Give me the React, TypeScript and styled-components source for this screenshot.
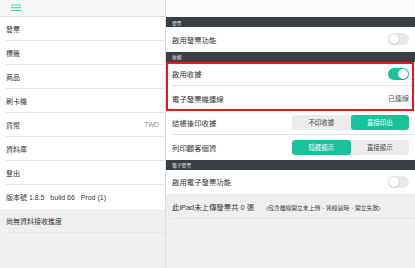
import React from 'react';
import styled, { createGlobalStyle, css } from 'styled-components';

const TEAL = '#17c49a';

const GlobalStyle = createGlobalStyle`
  html, body {
    margin: 0;
    padding: 0;
    background: #fff;
  }
  body {
    font-family: 'Liberation Sans', 'Noto Sans CJK TC', sans-serif;
    color: #333;
  }
  * {
    box-sizing: border-box;
  }
`;

const Screen = styled.div`
  display: flex;
  width: 415px;
  height: 268px;
  overflow: hidden;
`;

const Sidebar = styled.div`
  display: flex;
  flex-direction: column;
  width: 166px;
  border-right: 1px solid #dcdcdc;
  background: #efefef;
`;

const SideHeader = styled.div`
  display: flex;
  align-items: center;
  height: 17px;
  padding-left: 11px;
  background: #f8f8f8;
  border-bottom: 1px solid #dedede;
`;

const SideList = styled.div`
  background: #fff;
`;

const SideFooter = styled.div`
  flex: 1;
  background: #efefef;
`;

const SideItem = styled.div<{ last?: boolean }>`
  display: flex;
  align-items: center;
  justify-content: space-between;
  height: 24px;
  margin-left: 6px;
  padding-right: 6px;
  font-size: 7px;
  border-bottom: 1px solid ${p => (p.last ? 'transparent' : '#e6e6e6')};
`;

const SideValue = styled.span`
  color: #8a8a8a;
  font-size: 6.5px;
`;

const Content = styled.div`
  display: flex;
  flex-direction: column;
  flex: 1;
  background: #efefef;
`;

const TopBar = styled.div`
  height: 17px;
  background: #fbfbfb;
`;

const SectionHeader = styled.div`
  display: flex;
  align-items: center;
  height: 10px;
  padding-left: 6px;
  background: #3a3f44;
  color: #e4e4e4;
  font-size: 4.8px;
`;

const Row = styled.div<{ flat?: boolean; gray?: boolean }>`
  display: flex;
  align-items: center;
  justify-content: space-between;
  height: 24.5px;
  padding: 0 6px 0 6px;
  font-size: 7.4px;
  background: ${p => (p.gray ? '#efefef' : '#fff')};
  ${p =>
    !p.flat &&
    css`
      background-image: linear-gradient(#e4e4e4, #e4e4e4);
      background-size: calc(100% - 6px) 1px;
      background-position: 6px 100%;
      background-repeat: no-repeat;
    `}
`;

const StatusText = styled.span`
  color: #555;
  font-size: 7px;
`;

const Note = styled.span`
  margin-left: 12px;
  font-size: 5.8px;
  color: #444;
`;

const Highlight = styled.div`
  position: relative;

  &::after {
    content: '';
    position: absolute;
    inset: 0 1px 0 0;
    border: 2px solid #e3191c;
    pointer-events: none;
  }
`;

const Toggle = styled.div<{ on?: boolean }>`
  position: relative;
  width: 21px;
  height: 12px;
  border-radius: 6px;
  background: ${p => (p.on ? TEAL : '#e9e9e9')};

  &::after {
    content: '';
    position: absolute;
    top: 1px;
    left: ${p => (p.on ? '10px' : '1px')};
    width: 10px;
    height: 10px;
    border-radius: 50%;
    background: #fff;
    box-shadow: 0 0.5px 1.5px rgba(0, 0, 0, 0.25);
  }
`;

const Segmented = styled.div`
  display: flex;
  width: 117px;
  height: 15px;
  border-radius: 3px;
  overflow: hidden;
  background: #ececec;
`;

const Segment = styled.div<{ active?: boolean }>`
  display: flex;
  flex: 1;
  align-items: center;
  justify-content: center;
  font-size: 6.4px;
  border-radius: 3px;
  color: ${p => (p.active ? '#fff' : '#444')};
  background: ${p => (p.active ? TEAL : 'transparent')};
`;

const Menu = () => (
  <svg width="10" height="8" viewBox="0 0 10 8">
    <g stroke="#34d2b4" strokeWidth="1">
      <line x1="0" y1="1" x2="10" y2="1" />
      <line x1="0" y1="3.7" x2="10" y2="3.7" />
      <line x1="0" y1="6.4" x2="10" y2="6.4" />
    </g>
  </svg>
);

const sideItems: { label: string; value?: string }[] = [
  { label: '發票' },
  { label: '標籤' },
  { label: '商品' },
  { label: '刷卡機' },
  { label: '貨幣', value: 'TWD' },
  { label: '資料庫' },
  { label: '登出' },
];

const App: React.FC = () => {
  return (
    <>
      <GlobalStyle />
      <Screen>
        <Sidebar>
          <SideHeader>
            <Menu />
          </SideHeader>
          <SideList>
            {sideItems.map(item => (
              <SideItem key={item.label}>
                <span>{item.label}</span>
                {item.value && <SideValue>{item.value}</SideValue>}
              </SideItem>
            ))}
            <SideItem last>
              <span>版本號 1.8.5&nbsp;&nbsp; build 66&nbsp;&nbsp; Prod (1)</span>
            </SideItem>
          </SideList>
          <SideFooter>
            <SideItem>
              <span>尚無資料接收進度</span>
            </SideItem>
          </SideFooter>
        </Sidebar>

        <Content>
          <TopBar />
          <SectionHeader>發票</SectionHeader>
          <Row flat>
            <span>啟用發票功能</span>
            <Toggle />
          </Row>
          <SectionHeader>收據</SectionHeader>
          <Highlight>
            <Row>
              <span>啟用收據</span>
              <Toggle on />
            </Row>
            <Row>
              <span>電子發票機連線</span>
              <StatusText>已連線</StatusText>
            </Row>
          </Highlight>
          <Row>
            <span>結帳後印收據</span>
            <Segmented>
              <Segment>不印收據</Segment>
              <Segment active>直接印出</Segment>
            </Segmented>
          </Row>
          <Row flat>
            <span>列印顧客個資</span>
            <Segmented>
              <Segment active>隱藏顯示</Segment>
              <Segment>直接顯示</Segment>
            </Segmented>
          </Row>
          <SectionHeader>電子發票</SectionHeader>
          <Row flat>
            <span>啟用電子發票功能</span>
            <Toggle />
          </Row>
          <Row gray>
            <span>
              此iPad未上傳發票共 0 張
              <Note>(包含離線開立未上傳、連線逾時、開立失敗)</Note>
            </span>
          </Row>
        </Content>
      </Screen>
    </>
  );
};

export default App;
